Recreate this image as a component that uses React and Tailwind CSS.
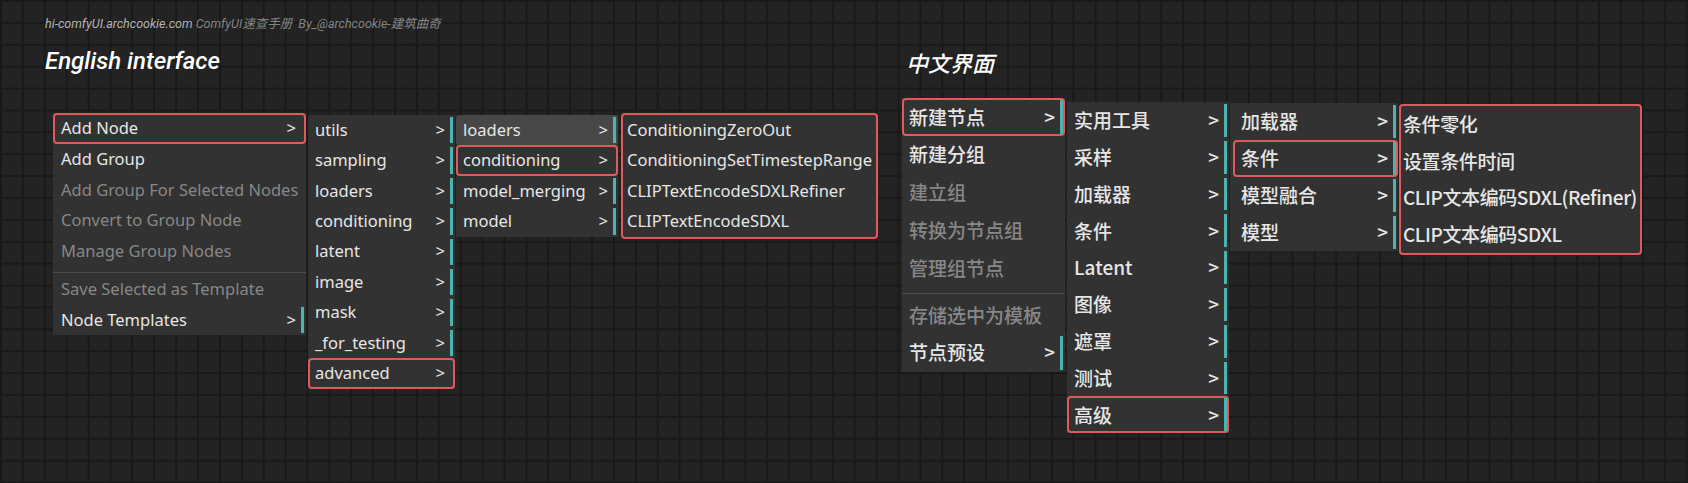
import React from 'react'

const enMain = [
  { label: 'Add Node', arrow: true, hl: true },
  { label: 'Add Group' },
  { label: 'Add Group For Selected Nodes', off: true },
  { label: 'Convert to Group Node', off: true },
  { label: 'Manage Group Nodes', off: true },
  { sep: true },
  { label: 'Save Selected as Template', off: true },
  { label: 'Node Templates', arrow: true, bar: true },
]

const enCats = [
  { label: 'utils', arrow: true, bar: true },
  { label: 'sampling', arrow: true, bar: true },
  { label: 'loaders', arrow: true, bar: true },
  { label: 'conditioning', arrow: true, bar: true },
  { label: 'latent', arrow: true, bar: true },
  { label: 'image', arrow: true, bar: true },
  { label: 'mask', arrow: true, bar: true },
  { label: '_for_testing', arrow: true, bar: true },
  { label: 'advanced', arrow: true, hl: true },
]

const enAdvanced = [
  { label: 'loaders', arrow: true, bar: true, active: true },
  { label: 'conditioning', arrow: true, hl: true },
  { label: 'model_merging', arrow: true, bar: true },
  { label: 'model', arrow: true, bar: true },
]

const enNodes = ['ConditioningZeroOut', 'ConditioningSetTimestepRange', 'CLIPTextEncodeSDXLRefiner', 'CLIPTextEncodeSDXL']

const cnMain = [
  { label: '新建节点', arrow: true, hl: true, bar: true },
  { label: '新建分组' },
  { label: '建立组', off: true },
  { label: '转换为节点组', off: true },
  { label: '管理组节点', off: true },
  { sep: true },
  { label: '存储选中为模板', off: true },
  { label: '节点预设', arrow: true, bar: true },
]

const cnCats = [
  { label: '实用工具', arrow: true, bar: true },
  { label: '采样', arrow: true, bar: true },
  { label: '加载器', arrow: true, bar: true },
  { label: '条件', arrow: true, bar: true },
  { label: 'Latent', arrow: true, bar: true },
  { label: '图像', arrow: true, bar: true },
  { label: '遮罩', arrow: true, bar: true },
  { label: '测试', arrow: true, bar: true },
  { label: '高级', arrow: true, hl: true, bar: true },
]

const cnAdvanced = [
  { label: '加载器', arrow: true, bar: true },
  { label: '条件', arrow: true, hl: true, bar: true },
  { label: '模型融合', arrow: true, bar: true },
  { label: '模型', arrow: true, bar: true },
]

const cnNodes = ['条件零化', '设置条件时间', 'CLIP文本编码SDXL(Refiner)', 'CLIP文本编码SDXL']

function Menu({ items, rowH, sepClass, lp = 'pl-[5px]', className = '' }) {
  return (
    <div className={`flex flex-col bg-[#323232] ${className}`}>
      {items.map((it, i) => {
        if (it.sep) {
          return <div key={i} className={`h-px bg-[#4c4c4c] ${sepClass}`} />
        }
        return (
          <div
            key={i}
            className={`${rowH} flex items-center border-2 rounded-[4px] ${it.hl ? 'border-[#e05a5c]' : 'border-transparent'} ${it.active ? 'bg-[#474747]' : ''}`}
          >
            <span className={`flex-1 whitespace-nowrap ${lp} ${it.off ? 'text-[#878787]' : 'text-[#e6e6e6]'}`}>{it.label}</span>
            {it.arrow && <span className="text-[#e6e6e6]">&gt;</span>}
            <span className={`ml-[5px] w-[3px] self-stretch ${it.bar ? 'bg-[#4cb3ae]' : ''}`} />
          </div>
        )
      })}
    </div>
  )
}

function NodeList({ items, rowH, lp, className = '' }) {
  return (
    <div className={`flex flex-col bg-[#323232] border-2 border-[#e05a5c] rounded-[4px] ${className}`}>
      {items.map(n => (
        <div key={n} className={`${rowH} flex items-center whitespace-nowrap text-[#e6e6e6] ${lp}`}>
          {n}
        </div>
      ))}
    </div>
  )
}

export default function App() {
  return (
    <div className="w-[1688px] h-[483px] overflow-hidden bg-[#232323] bg-[linear-gradient(to_right,#191919_2px,transparent_2px),linear-gradient(to_bottom,#191919_2px,transparent_2px)] bg-[size:21.9px_21.9px] flex">
      {/* English */}
      <div className="w-[902px] shrink-0 pl-[45px] pt-[16px]">
        <div className="h-[16px] leading-[16px] text-[12.5px] italic font-['Roboto',sans-serif] whitespace-nowrap">
          <span className="text-[#b4b4b4]">hi-comfyUI.archcookie.com</span>
          <span className="text-[#858585] font-['Roboto','Noto_Sans_CJK_SC',sans-serif]"> ComfyUI速查手册&nbsp; By_@archcookie-建筑曲奇</span>
        </div>
        <div className="mt-[15px] h-[28px] leading-[28px] text-[24px] italic font-medium text-white font-['Roboto',sans-serif]">
          English interface
        </div>
        <div className="mt-[38px] flex items-start font-['Noto_Sans',sans-serif] text-[16.5px]">
          <Menu items={enMain} rowH="h-[30.75px]" sepClass="mt-[5px] mb-[1px]" lp="pl-[6px]" className="ml-[8px] w-[253px]" />
          <Menu items={enCats} rowH="h-[30.4px]" className="ml-[2px] mt-[2px] w-[147px]" />
          <Menu items={enAdvanced} rowH="h-[30.4px]" className="ml-[1px] mt-[2px] w-[162px]" />
          <NodeList items={enNodes} rowH="h-[30.4px]" lp="pl-[4px]" className="ml-[3px] w-[257px]" />
        </div>
      </div>

      {/* Chinese */}
      <div className="pt-[48px] font-['Noto_Sans_CJK_SC',sans-serif]">
        <div className="ml-[4px] h-[28px] leading-[28px] text-[22px] italic font-medium text-white">中文界面</div>
        <div className="mt-[22px] flex items-start text-[19px] font-medium">
          <Menu items={cnMain} rowH="h-[37.8px]" sepClass="mt-[6px] mb-[2px]" className="w-[163px]" />
          <Menu items={cnCats} rowH="h-[36.8px]" className="ml-[2px] mt-[4px] w-[162px]" />
          <Menu items={cnAdvanced} rowH="h-[37px]" lp="pl-[6px]" className="ml-[1px] mt-[5px] w-[168px] pl-[3px]" />
          <NodeList items={cnNodes} rowH="h-[36.7px]" lp="pl-[2px] tracking-[-0.4px]" className="ml-[1px] mt-[6px] w-[243px]" />
        </div>
      </div>
    </div>
  )
}
